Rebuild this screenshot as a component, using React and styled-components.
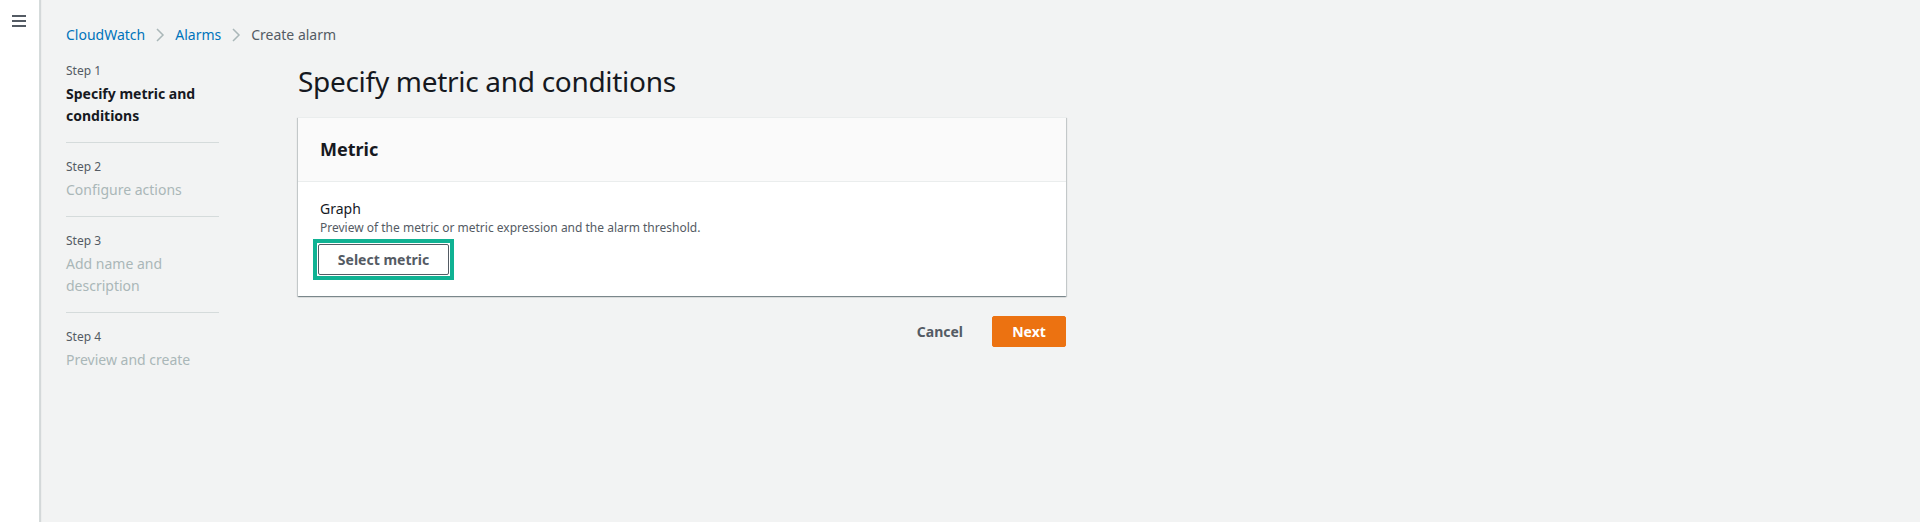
import React from "react";
import styled, { createGlobalStyle } from "styled-components";

const GlobalStyle = createGlobalStyle`
  html, body {
    margin: 0;
    padding: 0;
    background: #f2f3f3;
    font-family: "Noto Sans", "Open Sans", Arial, sans-serif;
    color: #16191f;
  }
`;

const Page = styled.div`
  display: flex;
  flex-flow: row nowrap;
  min-height: 522px;
`;

const SideNav = styled.div`
  width: 40px;
  flex-shrink: 0;
  background: #ffffff;
  border-right: 1px solid #d5dbdb;
  box-shadow: 1px 0 1px rgba(0, 28, 36, 0.12);
  display: flex;
  justify-content: center;
  padding-top: 14px;
  box-sizing: border-box;
`;

const MenuButton = styled.button`
  width: 16px;
  height: 14px;
  padding: 0;
  border: none;
  background: none;
  margin-left: -1px;
`;

const Main = styled.div`
  flex: 1;
  padding: 25px 0 0 26px;
`;

const Breadcrumbs = styled.nav`
  display: flex;
  align-items: center;
  height: 20px;
  font-size: 14px;
  line-height: 20px;
`;

const Crumb = styled.span`
  color: ${(p) => (p.current ? "#545b64" : "#0073bb")};
`;

const Chevron = styled.svg`
  width: 16px;
  height: 16px;
  margin: 0 7px;
`;

const Layout = styled.div`
  display: flex;
  flex-flow: row nowrap;
  margin-top: 18px;
`;

const Steps = styled.ol`
  list-style: none;
  margin: 0;
  padding: 0;
  width: 153px;
  flex-shrink: 0;
  margin-right: 79px;
`;

const StepItem = styled.li`
  padding: 16px 0 15px;
  border-bottom: 1px solid #d5dbdb;

  &:first-child {
    padding-top: 0;
  }
  &:last-child {
    border-bottom: none;
  }
`;

const StepLabel = styled.div`
  font-size: 12px;
  line-height: 16px;
  color: #545b64;
  margin-bottom: 4px;
`;

const StepTitle = styled.div`
  font-size: 14px;
  line-height: 22px;
  font-weight: ${(p) => (p.active ? 700 : 400)};
  color: ${(p) => (p.active ? "#16191f" : "#aab7b8")};
`;

const Content = styled.div`
  width: 768px;
  display: flex;
  flex-flow: column nowrap;
`;

const Heading = styled.h1`
  margin: 0 0 18px;
  font-size: 28px;
  line-height: 36px;
  font-weight: 400;
  letter-spacing: -0.3px;
  color: #16191f;
`;

const Card = styled.div`
  background: #ffffff;
  border-top: 1px solid #eaeded;
  box-shadow: 0 1px 1px 0 rgba(0, 28, 36, 0.3), 1px 1px 1px 0 rgba(0, 28, 36, 0.15),
    -1px 1px 1px 0 rgba(0, 28, 36, 0.15);
`;

const CardHeader = styled.div`
  background: #fafafa;
  border-bottom: 1px solid #eaeded;
  padding: 20px 22px 21px;
  font-size: 18px;
  line-height: 22px;
  font-weight: 700;
`;

const CardBody = styled.div`
  padding: 16px 22px 16px;
`;

const FieldLabel = styled.div`
  font-size: 14px;
  line-height: 22px;
  color: #16191f;
`;

const FieldDescription = styled.div`
  font-size: 12px;
  line-height: 16px;
  color: #545b64;
`;

const FocusRing = styled.div`
  width: fit-content;
  margin: 3px 0 0 -7px;
  padding: 1px;
  border: 4px solid #10b293;
`;

const Button = styled.button`
  height: 31px;
  padding: 0 20px;
  border-radius: 2px;
  font-family: inherit;
  font-size: 14px;
  line-height: 20px;
  font-weight: 700;
  white-space: nowrap;
  cursor: pointer;
  border: 1px solid ${(p) => (p.variant === "primary" ? "#ec7211" : p.variant === "link" ? "transparent" : "#545b64")};
  background: ${(p) => (p.variant === "primary" ? "#ec7211" : p.variant === "link" ? "transparent" : "#ffffff")};
  color: ${(p) => (p.variant === "primary" ? "#ffffff" : "#545b64")};
`;

const SelectButton = styled(Button)`
  width: 131px;
  padding: 0;
  display: block;
`;

const Actions = styled.div`
  display: flex;
  justify-content: flex-end;
  align-items: center;
  gap: 8px;
  margin-top: 20px;
`;

const NextButton = styled(Button)`
  width: 74px;
  padding: 0;
`;

const steps = [
  { id: 1, title: "Specify metric and conditions" },
  { id: 2, title: "Configure actions" },
  { id: 3, title: "Add name and description" },
  { id: 4, title: "Preview and create" },
];

const ChevronIcon = () => (
  <Chevron viewBox="0 0 16 16">
    <path d="M5 2l6 6-6 6" fill="none" stroke="#aab7b8" strokeWidth="1.5" />
  </Chevron>
);

const App = () => {
  return (
    <>
      <GlobalStyle />
      <Page>
        <SideNav>
          <MenuButton aria-label="Open navigation">
            <svg width="16" height="14" viewBox="0 0 16 14">
              <rect x="1" y="1" width="14" height="2" fill="#545b64" />
              <rect x="1" y="6" width="14" height="2" fill="#545b64" />
              <rect x="1" y="11" width="14" height="2" fill="#545b64" />
            </svg>
          </MenuButton>
        </SideNav>
        <Main>
          <Breadcrumbs>
            <Crumb>CloudWatch</Crumb>
            <ChevronIcon />
            <Crumb>Alarms</Crumb>
            <ChevronIcon />
            <Crumb current>Create alarm</Crumb>
          </Breadcrumbs>
          <Layout>
            <Steps>
              {steps.map((step) => (
                <StepItem key={step.id}>
                  <StepLabel>Step {step.id}</StepLabel>
                  <StepTitle active={step.id === 1}>{step.title}</StepTitle>
                </StepItem>
              ))}
            </Steps>
            <Content>
              <Heading>Specify metric and conditions</Heading>
              <Card>
                <CardHeader>Metric</CardHeader>
                <CardBody>
                  <FieldLabel>Graph</FieldLabel>
                  <FieldDescription>
                    Preview of the metric or metric expression and the alarm threshold.
                  </FieldDescription>
                  <FocusRing>
                    <SelectButton>Select metric</SelectButton>
                  </FocusRing>
                </CardBody>
              </Card>
              <Actions>
                <Button variant="link">Cancel</Button>
                <NextButton variant="primary">Next</NextButton>
              </Actions>
            </Content>
          </Layout>
        </Main>
      </Page>
    </>
  );
};

export default App;
